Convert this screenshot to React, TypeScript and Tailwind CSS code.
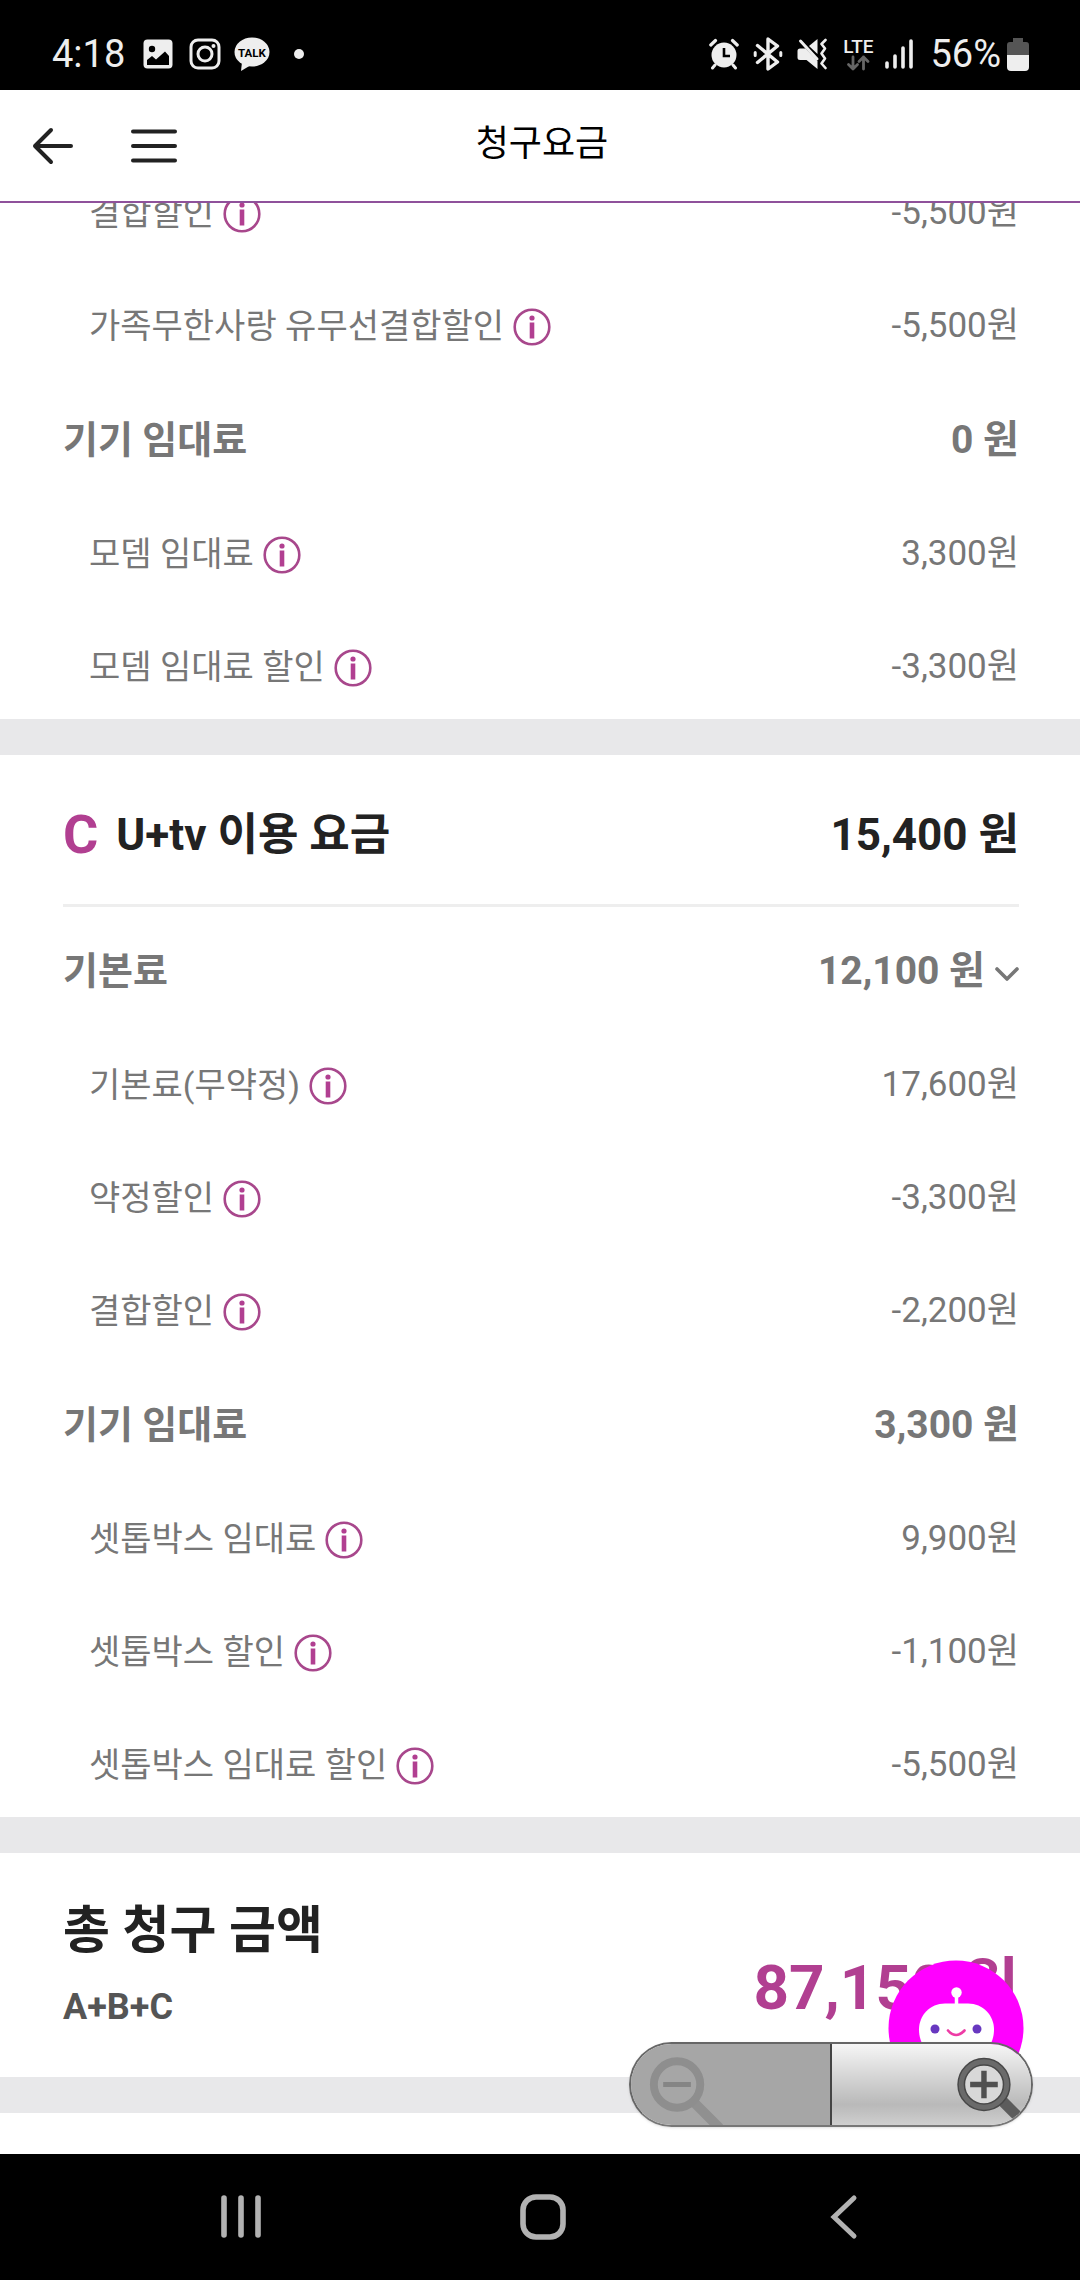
import React from "react";

type Item = { kind: "group" | "item"; label: string; amount: string; expandable?: boolean };

const internetItems: Item[] = [
  { kind: "item", label: "결합할인", amount: "-5,500원" },
  { kind: "item", label: "가족무한사랑 유무선결합할인", amount: "-5,500원" },
  { kind: "group", label: "기기 임대료", amount: "0 원" },
  { kind: "item", label: "모뎀 임대료", amount: "3,300원" },
  { kind: "item", label: "모뎀 임대료 할인", amount: "-3,300원" },
];

const tvItems: Item[] = [
  { kind: "group", label: "기본료", amount: "12,100 원", expandable: true },
  { kind: "item", label: "기본료(무약정)", amount: "17,600원" },
  { kind: "item", label: "약정할인", amount: "-3,300원" },
  { kind: "item", label: "결합할인", amount: "-2,200원" },
  { kind: "group", label: "기기 임대료", amount: "3,300 원" },
  { kind: "item", label: "셋톱박스 임대료", amount: "9,900원" },
  { kind: "item", label: "셋톱박스 할인", amount: "-1,100원" },
  { kind: "item", label: "셋톱박스 임대료 할인", amount: "-5,500원" },
];

function InfoButton({ label }: { label: string }) {
  return (
    <button type="button" aria-label={`${label} 안내`} className="ml-[9px] h-[38px] w-[38px] shrink-0">
      <svg viewBox="0 0 38 38" className="h-full w-full" fill="none">
        <circle cx="19" cy="19" r="17.300" stroke="#a8478c" strokeWidth="2.600" />
        <circle cx="19" cy="10" r="2.600" fill="#b13f91" />
        <path d="M19 14.500V30.500" stroke="#b13f91" strokeWidth="4.600" />
      </svg>
    </button>
  );
}

function BillRow({ item }: { item: Item }) {
  if (item.kind === "group") {
    return (
      <div className="flex min-h-[53px] items-center justify-between font-bold leading-[53px]">
        <dt className="text-[38px]">{item.label}</dt>
        <dd className="flex items-center text-[39px]">
          {item.amount}
          {item.expandable && (
            <button type="button" aria-label={`${item.label} 상세 보기`} className="ml-1.5 h-6 w-7">
              <svg viewBox="0 0 28 24" className="h-full w-full" fill="none">
                <path d="M6 9l10 10 10-10" stroke="#777" strokeWidth="3.600" strokeLinecap="round" strokeLinejoin="round" />
              </svg>
            </button>
          )}
        </dd>
      </div>
    );
  }
  return (
    <div className="flex h-[51px] items-center justify-between pl-[26px]">
      <dt className="flex items-center text-[34px]">
        {item.label}
        <InfoButton label={item.label} />
      </dt>
      <dd className="text-[35px]">{item.amount}</dd>
    </div>
  );
}

function BillList({ items }: { items: Item[] }) {
  return (
    <dl className="flex flex-col gap-[62px] pb-[26px] text-[#777]">
      {items.map((item) => (
        <BillRow key={item.label} item={item} />
      ))}
    </dl>
  );
}

function StatusBar() {
  return (
    <div className="relative z-20 flex h-[90px] items-center justify-between bg-black pl-[52px] pr-[51px] pt-[18px] text-[38px] leading-none text-[#eee]">
      <div className="flex items-center">
        <span>4:18</span>
        <svg viewBox="0 0 30 30" className="ml-[18px] h-[30px] w-[30px]">
          <rect x="0.500" y="0.500" width="29" height="29" rx="4" fill="#eee" />
          <circle cx="9" cy="10" r="3.200" fill="#000" />
          <path d="M4 21l5-4 4 3.500 9-8 4 4.500V26H4z" fill="#000" />
        </svg>
        <svg viewBox="0 0 32 32" className="ml-4 h-8 w-8" fill="none" stroke="#eee">
          <rect x="2" y="2" width="28" height="28" rx="7" strokeWidth="3" />
          <circle cx="16" cy="16" r="7" strokeWidth="3" />
          <circle cx="24.500" cy="8" r="2" fill="#eee" stroke="none" />
        </svg>
        <svg viewBox="0 0 36 34" className="ml-[13px] h-[34px] w-9">
          <ellipse cx="18" cy="15" rx="17.500" ry="14.500" fill="#eee" />
          <path d="M8 25L7 34l10-6z" fill="#eee" />
          <text x="18" y="19.500" textAnchor="middle" fontSize="11.500" fontWeight="700" fontFamily="Roboto, sans-serif" fill="#000">
            TALK
          </text>
        </svg>
        <span className="ml-6 h-2.5 w-2.5 rounded-full bg-[#eee]" />
      </div>
      <div className="flex items-center">
        <svg viewBox="0 0 30 32" className="h-8 w-[30px]" fill="none" stroke="#eee" strokeLinecap="round">
          <circle cx="15" cy="17" r="12.500" fill="#eee" stroke="none" />
          <path d="M1.800 7L6.500 2.500M28.200 7L23.500 2.500" strokeWidth="3.200" />
          <path d="M6 27l-2.500 3M24 27l2.500 3" strokeWidth="3" />
          <path d="M15 10v8h6" stroke="#000" strokeWidth="2.600" strokeLinecap="butt" />
        </svg>
        <svg viewBox="0 0 30 34" className="ml-3.5 h-[34px] w-[30px]" fill="none" stroke="#eee" strokeWidth="3.400" strokeLinecap="round" strokeLinejoin="round">
          <path d="M4.500 8.500L24.500 25 15 32V2l9.500 7L4.500 25.500" />
          <path d="M2.200 15.500v3M27.800 15.500v3" strokeWidth="3" />
        </svg>
        <svg viewBox="0 0 30 32" className="ml-3.5 h-8 w-[30px]">
          <path d="M0.500 13q0-2.500 2.500-2.500h5.500L20.500 23v8L9.500 22H3q-2.500 0-2.500-2.500z" fill="#eee" />
          <path d="M12 8l8.500-7v15z" fill="#eee" />
          <path d="M3.500 3L20 21" stroke="#eee" strokeWidth="3" strokeLinecap="round" />
          <path d="M28.500 2l-4 4 3.500 4.500-3.500 5 3.500 5-3.500 5 4 4.500" fill="none" stroke="#eee" strokeWidth="2.600" strokeLinecap="round" strokeLinejoin="round" />
        </svg>
        <div className="ml-4 flex flex-col items-center">
          <span className="text-[19px] font-medium leading-[17px]">LTE</span>
          <svg viewBox="0 0 24 16" className="h-4 w-6" fill="none" stroke="#666" strokeWidth="2.800" strokeLinecap="round" strokeLinejoin="round">
            <path d="M7 2v12M2.500 9.500L7 14l4.500-4.500M17.500 14V2M13 6.500L17.500 2 22 6.500" />
          </svg>
        </div>
        <svg viewBox="0 0 28 32" className="ml-3 h-8 w-7" stroke="#eee" strokeWidth="3.600" strokeLinecap="round">
          <path d="M2 25v4M10 18v11M18 10v19M26 3v26" />
        </svg>
        <span className="ml-[17px]">56%</span>
        <svg viewBox="0 0 22 34" className="ml-1.5 h-[34px] w-[22px]">
          <path d="M6 1h10v4h3q3 0 3 3v10H0V8q0-3 3-3h3z" fill="#555" />
          <path d="M0 18h22v12q0 4-4 4H4q-4 0-4-4z" fill="#eee" />
        </svg>
      </div>
    </div>
  );
}

function AppHeader() {
  return (
    <header className="relative z-20 grid h-[113px] grid-cols-[1fr_auto_1fr] items-center border-b-2 border-[#8f519b] bg-white pl-8 pr-7">
      <div className="flex items-center">
        <button type="button" aria-label="뒤로" className="h-10 w-11">
          <svg viewBox="0 0 44 40" className="h-full w-full" fill="none" stroke="#222" strokeWidth="4" strokeLinecap="round" strokeLinejoin="round">
            <path d="M39 20H3M19 4L3 20l16 16" />
          </svg>
        </button>
        <button type="button" aria-label="메뉴" className="ml-[55px] h-10 w-[46px]">
          <svg viewBox="0 0 46 40" className="h-full w-full" stroke="#222" strokeWidth="4" strokeLinecap="round">
            <path d="M2 5.500h42M2 20h42M2 34.500h42" />
          </svg>
        </button>
      </div>
      <h1 className="pb-1 text-[36px] text-black">청구요금</h1>
    </header>
  );
}

function ChatBotButton() {
  return (
    <button type="button" aria-label="챗봇 상담" className="absolute bottom-[58px] right-[56px] h-[136px] w-[136px]">
      <svg viewBox="0 0 136 136" className="h-full w-full">
        <circle cx="68" cy="68" r="67.500" fill="#f0f" />
        <circle cx="68.500" cy="32.500" r="5.200" fill="#fff" />
        <path d="M68.500 34v12" stroke="#fff" strokeWidth="3.500" />
        <path d="M57 43.500h23c15 0 26 12 26 26s-8 27-26 27H57c-18 0-26-13-26-27s11-26 26-26z" fill="#fff" />
        <circle cx="47" cy="69" r="4.500" fill="#6838c0" />
        <circle cx="89" cy="69" r="4.500" fill="#6838c0" />
        <path d="M60 70.500q8 9 16.500 0" fill="none" stroke="#ee3ba5" strokeWidth="2.600" strokeLinecap="round" />
      </svg>
    </button>
  );
}

function ZoomControls() {
  return (
    <div className="absolute bottom-[27px] right-[47px] flex h-[85px] w-[404px] overflow-hidden rounded-full border-2 border-[#666] border-b-[#777] shadow">
      <button type="button" aria-label="축소" className="flex-1 border-r-2 border-[#444] bg-[#a6a6a6]">
        <svg viewBox="0 0 100 82" className="h-full w-[100px]" fill="none">
          <path d="M60 56l29 29" stroke="#909090" strokeWidth="10" />
          <circle cx="46" cy="41" r="23.500" stroke="#8e8e8e" strokeWidth="8" />
          <path d="M32 41h28" stroke="#858585" strokeWidth="5" />
        </svg>
      </button>
      <button type="button" aria-label="확대" className="flex flex-1 justify-end bg-linear-to-b from-[#f6f6f6] via-[#b9b9b9] via-75% to-[#cfcfcf]">
        <svg viewBox="0 0 100 82" className="h-full w-[100px]" fill="none">
          <path d="M70 56l24 24" stroke="#5c5c5c" strokeWidth="11" />
          <circle cx="53" cy="41" r="23" fill="#d8d8d8" stroke="#484848" strokeWidth="8" />
          <circle cx="53" cy="41" r="23" stroke="#6a6a6a" strokeWidth="5" />
          <path d="M39 41h28M53 27v28" stroke="#505050" strokeWidth="5.500" />
        </svg>
      </button>
    </div>
  );
}

function NavigationBar() {
  return (
    <nav className="relative z-20 flex h-[126px] items-center bg-black pl-[90px] pr-[85px]">
      <button type="button" aria-label="최근 앱" className="flex flex-1 justify-center">
        <svg viewBox="0 0 42 48" className="h-12 w-[42px]" stroke="#b2b2b2" strokeWidth="5.600" strokeLinecap="round">
          <path d="M4 5v37M21 5v37M38 5v37" />
        </svg>
      </button>
      <button type="button" aria-label="홈" className="flex flex-1 justify-center">
        <svg viewBox="0 0 48 48" className="h-12 w-12" fill="none">
          <rect x="4" y="4" width="40" height="40" rx="13" stroke="#b2b2b2" strokeWidth="5.600" />
        </svg>
      </button>
      <button type="button" aria-label="뒤로" className="flex flex-1 justify-center">
        <svg viewBox="0 0 30 48" className="h-12 w-[30px]" fill="none" stroke="#b2b2b2" strokeWidth="5" strokeLinecap="round">
          <path d="M25 5L5 24l20 19" />
        </svg>
      </button>
    </nav>
  );
}

export default function App() {
  return (
    <div className="flex min-h-screen flex-col bg-white font-[Roboto,'Noto_Sans_CJK_KR',sans-serif]">
      <StatusBar />
      <AppHeader />
      <main className="relative -mt-[15px] grow">
        <section className="pl-[63px] pr-[61px]">
          <BillList items={internetItems} />
        </section>
        <div className="h-9 bg-[#e8e8ea]" />
        <section className="pl-[63px] pr-[61px]">
          <h2 className="mb-[38px] flex items-center justify-between border-b-3 border-[#eee] pb-9 pt-[47px] text-[44px] font-bold leading-[66px] text-[#222]">
            <span className="flex items-center">
              <span className="mr-[18px] text-[54px] text-[#b13f91]">C</span>
              U+tv 이용 요금
            </span>
            <span>15,400 원</span>
          </h2>
          <BillList items={tvItems} />
        </section>
        <div className="h-9 bg-[#e8e8ea]" />
        <section className="flex h-[224px] items-center justify-between pl-[63px] pr-[61px] font-bold">
          <div className="pb-1">
            <h2 className="text-[51px] leading-[75px] text-[#222]">총 청구 금액</h2>
            <p className="mt-3 text-[36px] leading-[54px] text-[#555]">A+B+C</p>
          </div>
          <p className="pt-11 text-[62px] text-[#b13f91]">87,150 원</p>
        </section>
        <div className="h-9 bg-[#e8e8ea]" />
        <div className="h-10" />
        <ChatBotButton />
        <ZoomControls />
      </main>
      <NavigationBar />
    </div>
  );
}
